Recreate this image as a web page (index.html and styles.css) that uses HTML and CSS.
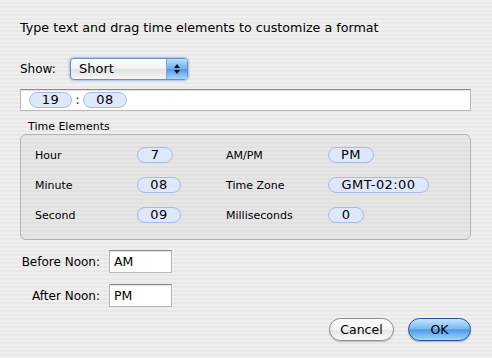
FILE: index.html
```html
<!DOCTYPE html>
<html lang="en">
<head>
    <meta charset="UTF-8">
    <title>Customize Time Format</title>
    <link rel="stylesheet" href="styles.css">
</head>
<body>

    <div class="dialog">
        <p class="intro">Type text and drag time elements to customize a format</p>

        <div class="show-row">
            <span class="show-label">Show:</span>
            <div class="popup">
                <span class="popup-text">Short</span>
                <span class="popup-arrows">
                    <svg width="8" height="12" viewBox="0 0 8 12">
                        <path d="M4 1 L7 5 L1 5 Z" fill="#111"/>
                        <path d="M4 11 L7 7 L1 7 Z" fill="#111"/>
                    </svg>
                </span>
            </div>
        </div>

        <div class="format-field">
            <span class="token w43">19</span>
            <span class="sep">:</span>
            <span class="token w44">08</span>
        </div>

        <div class="group-title">Time Elements</div>
        <div class="group">
            <span class="el-label">Hour</span>
            <span class="token w36">7</span>
            <span class="el-label">AM/PM</span>
            <span class="token w46">PM</span>

            <span class="el-label">Minute</span>
            <span class="token w44">08</span>
            <span class="el-label">Time Zone</span>
            <span class="token w101">GMT-02:00</span>

            <span class="el-label">Second</span>
            <span class="token w44">09</span>
            <span class="el-label">Milliseconds</span>
            <span class="token w36">0</span>
        </div>

        <div class="noon">
            <label class="noon-label">Before Noon:</label>
            <input class="noon-input" type="text" value="AM">
            <label class="noon-label">After Noon:</label>
            <input class="noon-input" type="text" value="PM">
        </div>

        <div class="buttons">
            <button class="btn cancel">Cancel</button>
            <button class="btn ok">OK</button>
        </div>
    </div>

</body>
</html>
```

FILE: styles.css
```css
/* Aqua style preferences sheet */
body {
    margin: 0;
    padding: 0;
    font-family: "DejaVu Sans", Verdana, sans-serif;
    font-size: 12px;
    color: #000;
    background: repeating-linear-gradient(#efefef 0 2px, #e8e8e8 2px 4px);
    width: 492px;
    height: 358px;
    overflow: hidden;
}
.dialog {
    padding: 20px 21px 0 20px;
}
.intro {
    margin: 0;
    line-height: 16px;
    font-size: 12.7px;
}
.show-row {
    display: flex;
    align-items: center;
    margin-top: 22px;
}
.show-label {
    width: 50px;
}
.popup {
    display: flex;
    width: 116px;
    height: 20px;
    border: 1px solid #6d8fc4;
    border-radius: 4px;
    box-shadow: 0 0 2px 1px #9dbde8;
    background: linear-gradient(#ffffff, #f0f0f0 50%, #e2e2e2 51%, #f6f6f6);
    overflow: hidden;
}
.popup-text {
    flex: 1;
    padding-left: 8px;
    line-height: 20px;
    font-size: 13px;
}
.popup-arrows {
    width: 20px;
    display: flex;
    align-items: center;
    justify-content: center;
    border-left: 1px solid #7da2d6;
    background: linear-gradient(#b9dcf8, #6fb0ef 50%, #4f9ae6 51%, #a6d6fb);
}
.format-field {
    display: flex;
    align-items: center;
    height: 20px;
    margin-top: 9px;
    padding-left: 8px;
    background: #fff;
    border: 1px solid #b8b8b8;
    border-top-color: #8a8a8a;
    box-shadow: inset 0 1px 1px rgba(0, 0, 0, 0.12);
}
.sep {
    width: 11px;
    text-align: center;
}
.token {
    display: inline-block;
    box-sizing: border-box;
    height: 16px;
    line-height: 14px;
    font-size: 13px;
    letter-spacing: 0.4px;
    text-align: center;
    background: #dfe8fa;
    border: 1px solid #a7bbe6;
    border-radius: 8px;
}
.w36 { width: 36px; }
.w43 { width: 43px; }
.w44 { width: 44px; }
.w46 { width: 46px; }
.w101 { width: 101px; }
.group-title {
    margin-top: 9px;
    padding-left: 8px;
    font-size: 11px;
    line-height: 14px;
}
.group {
    display: grid;
    grid-template-columns: 102px 89px 102px auto;
    grid-auto-rows: 16px;
    row-gap: 14px;
    align-items: center;
    justify-items: start;
    padding: 12px 14px 16px 14px;
    border: 1px solid #b4b4b4;
    border-radius: 6px;
    background: rgba(200, 200, 200, 0.22);
}
.el-label {
    font-size: 11px;
}
.noon {
    display: grid;
    grid-template-columns: 80px auto;
    column-gap: 9px;
    row-gap: 11px;
    align-items: center;
    margin-top: 10px;
}
.noon-label {
    text-align: right;
    white-space: nowrap;
    font-size: 12px;
}
.noon-input {
    box-sizing: border-box;
    width: 63px;
    height: 23px;
    margin: 0;
    padding: 0 4px;
    font-family: "DejaVu Sans", Verdana, sans-serif;
    font-size: 12.5px;
    background: #fff;
    border: 1px solid #b8b8b8;
    border-top-color: #8a8a8a;
    box-shadow: inset 0 1px 1px rgba(0, 0, 0, 0.12);
    outline: none;
}
.buttons {
    display: flex;
    justify-content: flex-end;
    gap: 14px;
    margin-top: 11px;
}
.btn {
    height: 23px;
    padding: 0;
    font-family: "DejaVu Sans", Verdana, sans-serif;
    font-size: 12.5px;
    color: #000;
    border-radius: 12px;
    cursor: pointer;
}
.cancel {
    width: 65px;
    border: 1px solid #8c8c8c;
    background: linear-gradient(#fdfdfd, #f2f2f2 50%, #e4e4e4 51%, #fafafa);
    box-shadow: 0 1px 1px rgba(0, 0, 0, 0.2);
}
.ok {
    width: 63px;
    border: 1px solid #2d4f93;
    background: linear-gradient(#c3e3fb, #7dbcf2 45%, #4b9be8 52%, #9fd6fd);
    box-shadow: 0 1px 1px rgba(0, 0, 0, 0.25);
}
```
